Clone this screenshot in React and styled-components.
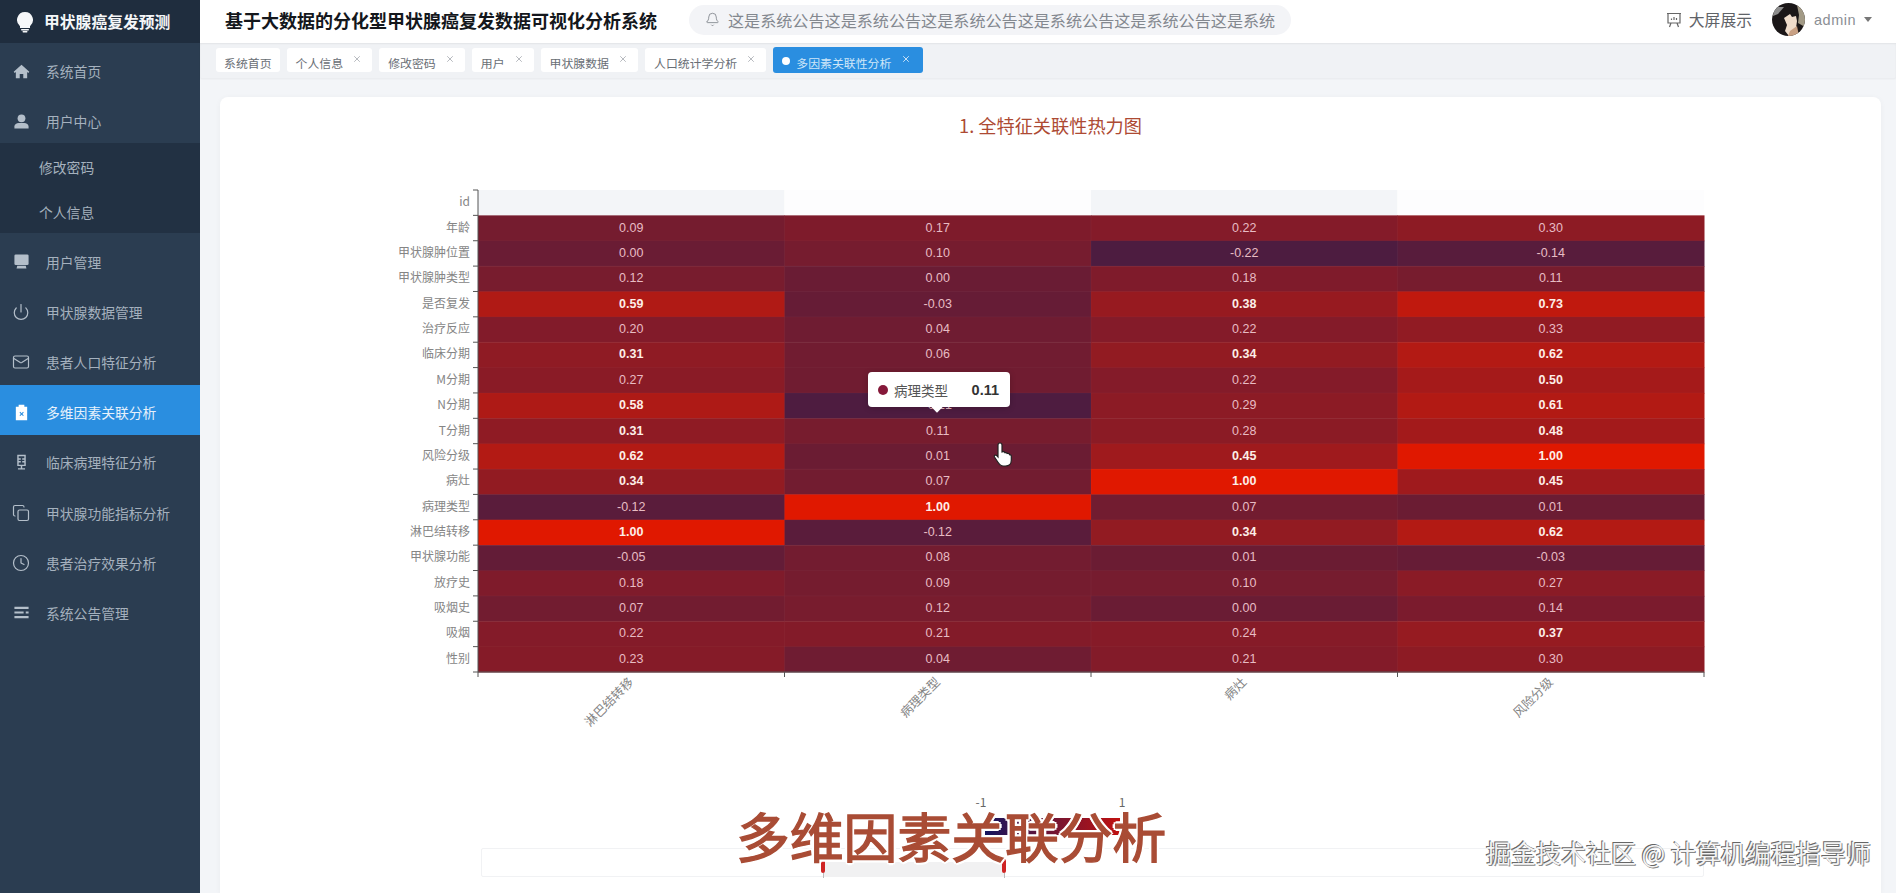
import React from "react";
import styled, { createGlobalStyle } from "styled-components";
import { Bell, Clock, Copy, Mail, Power, X } from "lucide-react";

const FONT = `"Noto Sans CJK SC", "Liberation Sans", sans-serif`;

const GlobalStyle = createGlobalStyle`
  html, body {
    margin: 0;
    padding: 0;
    height: 100%;
    overflow: hidden;
    font-family: ${FONT};
  }
  * { box-sizing: border-box; }
`;

const Page = styled.div`
  display: flex;
  width: 1896px;
  height: 893px;
  overflow: hidden;
  position: relative;
  background: #f3f5f8;
`;

/* sidebar */
const Sidebar = styled.aside`
  width: 200px;
  flex-shrink: 0;
  background: #2b3d51;
  display: flex;
  flex-direction: column;
`;
const Brand = styled.div`
  height: 43px;
  background: #1f2d3e;
  display: flex;
  align-items: center;
  padding-left: 16px;
  gap: 10px;
  color: #f4f6f8;
  font-size: 15.8px;
  font-weight: 700;
  margin-bottom: 1.2px;
`;
const MenuItem = styled.div`
  height: 50.2px;
  display: flex;
  align-items: center;
  padding: 4px 0 0 12px;
  gap: 16px;
  font-size: 13.8px;
  color: ${(p) => (p.$active ? "#e6f1fb" : "#a5b1be")};
  background: ${(p) => (p.$active ? "#2a8ee0" : "transparent")};
`;
const MenuIcon = styled.span`
  width: 18px;
  display: flex;
  justify-content: center;
  color: ${(p) => (p.$active ? "#fff" : "#b4bfca")};
`;
const SubMenu = styled.div`
  background: #223143;
  margin-top: -2px;
  margin-bottom: 2px;
`;
const SubItem = styled.div`
  height: 45px;
  display: flex;
  align-items: center;
  padding: 3px 0 0 39px;
  font-size: 13.8px;
  color: #a5b1be;
`;

/* right part */
const Main = styled.div`
  flex: 1;
  min-width: 0;
  display: flex;
  flex-direction: column;
`;
const Navbar = styled.header`
  height: 43px;
  background: #fff;
  display: flex;
  align-items: center;
  padding: 0 24px 4px 25px;
`;
const AppTitle = styled.div`
  font-size: 18px;
  font-weight: 700;
  color: #14171c;
  white-space: nowrap;
  width: 464px;
`;
const Notice = styled.div`
  width: 602px;
  height: 30px;
  border-radius: 15px;
  background: #f3f4f7;
  display: flex;
  align-items: center;
  padding-left: 16px;
  gap: 8px;
  color: #83888f;
  font-size: 16.1px;
  white-space: nowrap;
  overflow: hidden;
  svg { flex-shrink: 0; }
`;
const NavRight = styled.div`
  margin-left: auto;
  display: flex;
  align-items: center;
`;
const ScreenLink = styled.div`
  display: flex;
  align-items: center;
  gap: 7px;
  font-size: 15.8px;
  color: #5f6368;
  margin-right: 20px;
`;
const UserName = styled.span`
  font-family: "Liberation Sans", sans-serif;
  font-size: 14.5px;
  letter-spacing: 0.5px;
  color: #8b8f95;
  margin-left: 9px;
`;
const Caret = styled.span`
  width: 0;
  height: 0;
  margin-left: 8px;
  border-left: 4px solid transparent;
  border-right: 4px solid transparent;
  border-top: 5px solid #777;
`;

const TagBar = styled.div`
  height: 35px;
  background: #f0f2f5;
  display: flex;
  align-items: center;
  gap: 7px;
  padding: 0 0 1px 16px;
  box-shadow: inset 0 1px 2px rgba(0, 0, 0, 0.06), 0 1px 2px rgba(0, 0, 0, 0.05);
`;
const Tag = styled.div`
  height: ${(p) => (p.$active ? "26px" : "24px")};
  display: flex;
  align-items: center;
  padding: 4px ${(p) => (p.$plain ? "8px" : p.$active ? "12px" : "10px")} 0 ${(p) => (p.$plain ? "8px" : "9px")};
  border-radius: 3px;
  font-size: 11.9px;
  white-space: nowrap;
  background: ${(p) => (p.$active ? "#2a8ee0" : "#fff")};
  color: ${(p) => (p.$active ? "#cfe6f8" : "#696e75")};
`;
const TagDot = styled.i`
  width: 8px;
  height: 8px;
  border-radius: 50%;
  background: #fff;
  margin: -3px 6px 0 0;
`;
const TagClose = styled.span`
  display: flex;
  margin: -6px 0 0 ${(p) => (p.$active ? "10px" : "9px")};
  color: ${(p) => (p.$active ? "#e6f1fb" : "#8b9098")};
`;

const Content = styled.main`
  flex: 1;
  min-height: 0;
  padding: 19px 15px 0 20px;
`;
const Card = styled.section`
  height: 100%;
  background: #fff;
  border-radius: 8px 8px 0 0;
  box-shadow: 0 1px 6px rgba(0, 0, 0, 0.04);
  overflow: hidden;
`;
const ChartTitle = styled.h2`
  margin: 0;
  height: 58px;
  padding-top: 15px;
  text-align: center;
  font-size: 18.2px;
  line-height: 26px;
  font-weight: 400;
  color: #ad4a33;
`;
const ChartSvg = styled.svg`
  display: block;
  font-family: ${FONT};
`;

/* things lying over the chart */
const Tooltip = styled.div`
  position: absolute;
  left: 868px;
  top: 372px;
  width: 142px;
  height: 35px;
  background: #fff;
  border-radius: 4px;
  display: flex;
  align-items: center;
  padding: 0 11px 0 10px;
  font-size: 13.5px;
  color: #555;
  box-shadow: 0 1px 6px rgba(0, 0, 0, 0.2);
  &::after {
    content: "";
    position: absolute;
    left: 65px;
    bottom: -4px;
    width: 8px;
    height: 8px;
    background: #fff;
    transform: rotate(45deg);
  }
`;
const TooltipDot = styled.i`
  width: 10px;
  height: 10px;
  border-radius: 50%;
  background: #85193a;
  margin-right: 6px;
`;
const TooltipValue = styled.b`
  margin-left: auto;
  font-family: "Liberation Sans", sans-serif;
  font-size: 14.5px;
  color: #333;
`;
const HandCursor = styled.svg`
  position: absolute;
  left: 992px;
  top: 441px;
`;
const Caption = styled.div`
  position: absolute;
  left: 736px;
  top: 797px;
  font-size: 53.8px;
  line-height: 76px;
  font-weight: 400;
  color: #a94c35;
  -webkit-text-stroke: 1.4px #a94c35;
  white-space: nowrap;
  text-shadow: 3px 0 #fff, -3px 0 #fff, 0 3px #fff, 0 -3px #fff, 2px 2px #fff, -2px -2px #fff, 2px -2px #fff, -2px 2px #fff;
`;
const Watermark = styled.div`
  position: absolute;
  left: 1486px;
  top: 834px;
  font-size: 25px;
  line-height: 36px;
  color: #f4f4f4;
  white-space: nowrap;
  text-shadow: -1px -1px 0 #666, 1px 1px 0 #888;
`;
const SliderTrack = styled.div`
  position: absolute;
  left: 481px;
  top: 848px;
  width: 1223px;
  height: 29px;
  border: 1px solid #f1f2f4;
  border-radius: 2px;
`;
const SliderRange = styled.div`
  position: absolute;
  left: 341px;
  top: 13px;
  width: 181px;
  height: 15px;
  background: #f1f1f2;
`;
const SliderHandle = styled.i`
  position: absolute;
  top: -3px;
  ${(p) => (p.$right ? "right: -2px;" : "left: -2px;")}
  width: 4px;
  height: 14px;
  border-radius: 2px;
  background: #cf2424;
  &::after {
    content: "";
    position: absolute;
    left: 1.5px;
    top: 14px;
    width: 1px;
    height: 5px;
    background: #bbb;
  }
`;

/* icons drawn for the menu */
const Glyph = ({ size = 17, children }) => (
  <svg width={size} height={size} viewBox="0 0 24 24" fill="currentColor">
    {children}
  </svg>
);
const HomeIcon = () => (
  <Glyph>
    <path d="M12 2.5 1 12.5l1.4 1.6 1.6-1.3V21.5h5.5v-6h5v6H20v-8.7l1.6 1.3 1.4-1.6z" />
  </Glyph>
);
const UserIcon = () => (
  <Glyph>
    <circle cx="12" cy="7.5" r="5.5" />
    <path d="M2 22v-3c0-3 3-5 6-5h8c3 0 6 2 6 5v3z" />
  </Glyph>
);
const PlatformIcon = () => (
  <Glyph>
    <path d="M4 2h16a2 2 0 0 1 2 2v11a2 2 0 0 1-2 2H4a2 2 0 0 1-2-2V4a2 2 0 0 1 2-2z" />
    <path d="M6 18h12l1 4H5z" />
  </Glyph>
);
const ClipboardIcon = () => (
  <Glyph>
    <path fillRule="evenodd" d="M8 1h8v3h4v19H4V4h4zM9.2 12l2 2-2 2 1 1 2-2 2 2 1-1-2-2 2-2-1-1-2 2-2-2z" />
  </Glyph>
);
const MicIcon = () => (
  <Glyph>
    <path
      fill="none"
      stroke="currentColor"
      strokeWidth="2"
      d="M7 2h10v14H7zM7 7h4M7 11h4M13 7h4M13 11h4M12 16v4M7 21h10"
    />
  </Glyph>
);
const LinesIcon = () => (
  <Glyph>
    <path d="M2 4h20v3H2zM2 10.5h13v3H2zM18 10.5h4v3h-4zM2 17h20v3H2z" />
  </Glyph>
);
const BulbIcon = () => (
  <svg width="18" height="22" viewBox="0 0 18 22" fill="#f6f8fa">
    <path d="M9 1a8 8 0 0 0-5 14.2V17h10v-1.8A8 8 0 0 0 9 1z" />
    <rect x="5" y="18" width="8" height="1.5" rx=".7" />
    <rect x="6.5" y="20" width="5" height="1.5" rx=".7" />
  </svg>
);
const BoardIcon = () => (
  <svg width="16" height="16" viewBox="0 0 16 16" fill="none" stroke="#666" strokeWidth="1.2">
    <path d="M1 1.5h14M2 1.5V11h12V1.5M5 11l-1.5 4M11 11l1.5 4" />
    <path d="M5.5 8V6.500M8 8V5M10.500 8V6" />
  </svg>
);
const Avatar = () => (
  <svg width="33" height="33" viewBox="0 0 33 33">
    <defs>
      <clipPath id="avatarClip">
        <circle cx="16.5" cy="16.5" r="16.5" />
      </clipPath>
    </defs>
    <g clipPath="url(#avatarClip)">
      <rect width="33" height="33" fill="#1b1718" />
      <path d="M25 2l8 4v18l-7-4 1-8z" fill="#a29a86" />
      <path d="M2 4h10l-6 7-5 2z" fill="#8e8e8e" />
      <path d="M12 15l6-4 2 3 4-1 1 5-1 7-7 8-4-5 2-6z" fill="#efdccb" />
      <path d="M18 28l7-5 2 10H16z" fill="#c9a184" />
    </g>
  </svg>
);

const menuBefore = [
  { label: "系统首页", icon: <HomeIcon /> },
  { label: "用户中心", icon: <UserIcon /> },
];
const menuAfter = [
  { label: "用户管理", icon: <PlatformIcon /> },
  { label: "甲状腺数据管理", icon: <Power size={18} strokeWidth={1.6} /> },
  { label: "患者人口特征分析", icon: <Mail size={18} strokeWidth={1.6} /> },
  { label: "多维因素关联分析", icon: <ClipboardIcon />, active: true },
  { label: "临床病理特征分析", icon: <MicIcon /> },
  { label: "甲状腺功能指标分析", icon: <Copy size={18} strokeWidth={1.6} /> },
  { label: "患者治疗效果分析", icon: <Clock size={18} strokeWidth={1.6} /> },
  { label: "系统公告管理", icon: <LinesIcon /> },
];
const tags = ["个人信息", "修改密码", "用户", "甲状腺数据", "人口统计学分析"];

/* heat map data, one row per feature, top to bottom */
const rows = [
  ["年龄", 0.09, 0.17, 0.22, 0.3],
  ["甲状腺肿位置", 0, 0.1, -0.22, -0.14],
  ["甲状腺肿类型", 0.12, 0, 0.18, 0.11],
  ["是否复发", 0.59, -0.03, 0.38, 0.73],
  ["治疗反应", 0.2, 0.04, 0.22, 0.33],
  ["临床分期", 0.31, 0.06, 0.34, 0.62],
  ["M分期", 0.27, 0.05, 0.22, 0.5],
  ["N分期", 0.58, -0.21, 0.29, 0.61],
  ["T分期", 0.31, 0.11, 0.28, 0.48],
  ["风险分级", 0.62, 0.01, 0.45, 1],
  ["病灶", 0.34, 0.07, 1, 0.45],
  ["病理类型", -0.12, 1, 0.07, 0.01],
  ["淋巴结转移", 1, -0.12, 0.34, 0.62],
  ["甲状腺功能", -0.05, 0.08, 0.01, -0.03],
  ["放疗史", 0.18, 0.09, 0.1, 0.27],
  ["吸烟史", 0.07, 0.12, 0, 0.14],
  ["吸烟", 0.22, 0.21, 0.24, 0.37],
  ["性别", 0.23, 0.04, 0.21, 0.3],
];
const columns = ["淋巴结转移", "病理类型", "病灶", "风险分级"];

const cellColor = (v) => {
  if (v < 0) return `rgb(${106 + 132 * v},28,${52 - 55 * v})`;
  return `rgb(${106 + 118 * v},${28 - 4 * v},${52 - 52 * v})`;
};

const GRID = { x: 258, y: 35, w: 1226, h: 482 };
const colW = GRID.w / 4;
const rowH = GRID.h / 19;

const Heatmap = () => (
  <ChartSvg width="1661" height="680" viewBox="0 0 1661 680">
    <defs>
      <linearGradient id="mapScale" x1="0" x2="1" y1="0" y2="0">
        <stop offset="0" stopColor="#14145e" />
        <stop offset="0.55" stopColor="#7a1530" />
        <stop offset="1" stopColor="#c01010" />
      </linearGradient>
    </defs>

    {/* the empty id row */}
    <rect x={GRID.x} y={GRID.y} width={colW} height={rowH} fill="#f3f5f8" />
    <rect x={GRID.x + colW} y={GRID.y} width={colW} height={rowH} fill="#fdfdfe" />
    <rect x={GRID.x + colW * 2} y={GRID.y} width={colW} height={rowH} fill="#f3f5f8" />
    <rect x={GRID.x + colW * 3} y={GRID.y} width={colW} height={rowH} fill="#fdfdfe" />

    {rows.map(([name, ...values], r) =>
      values.map((v, c) => {
        const x = GRID.x + c * colW;
        const y = GRID.y + (r + 1) * rowH;
        const strong = v > 0.3 && v !== 0.33;
        return (
          <g key={name + c}>
            <rect x={x} y={y} width={colW + 0.5} height={rowH + 0.5} fill={cellColor(v)} />
            <text
              x={x + colW / 2}
              y={y + rowH / 2 + 3.5}
              textAnchor="middle"
              fontFamily="'Liberation Sans', sans-serif"
              fontSize="12.5"
              fontWeight={strong ? 700 : 400}
              fill={strong ? "#fdeee8" : "#e8bcc4"}
            >
              {v.toFixed(2)}
            </text>
          </g>
        );
      })
    )}

    {/* faint separators between the cells */}
    {[1, 2, 3].map((i) => (
      <line
        key={i}
        x1={GRID.x + i * colW}
        x2={GRID.x + i * colW}
        y1={GRID.y + rowH}
        y2={GRID.y + GRID.h}
        stroke="rgba(255,255,255,0.03)"
      />
    ))}
    {rows.map((_, i) => (
      <line
        key={i}
        x1={GRID.x}
        x2={GRID.x + GRID.w}
        y1={GRID.y + (i + 2) * rowH}
        y2={GRID.y + (i + 2) * rowH}
        stroke="rgba(255,255,255,0.03)"
      />
    ))}

    {/* y axis */}
    <line x1={GRID.x} x2={GRID.x} y1={GRID.y} y2={GRID.y + GRID.h} stroke="#555" />
    {Array.from({ length: 20 }, (_, i) => (
      <line
        key={i}
        x1={GRID.x - 5}
        x2={GRID.x}
        y1={GRID.y + i * rowH}
        y2={GRID.y + i * rowH}
        stroke="#555"
      />
    ))}
    {["id", ...rows.map((row) => row[0])].map((name, i) => (
      <text
        key={name}
        x={GRID.x - 8}
        y={GRID.y + i * rowH + rowH / 2 + 3.5}
        textAnchor="end"
        fontSize="12"
        fill="#858585"
      >
        {name}
      </text>
    ))}

    {/* x axis */}
    <line x1={GRID.x} x2={GRID.x + GRID.w} y1={GRID.y + GRID.h} y2={GRID.y + GRID.h} stroke="#555" />
    {[0, 1, 2, 3, 4].map((i) => (
      <line
        key={i}
        x1={GRID.x + i * colW}
        x2={GRID.x + i * colW}
        y1={GRID.y + GRID.h}
        y2={GRID.y + GRID.h + 5}
        stroke="#555"
      />
    ))}
    {columns.map((name, i) => (
      <text
        key={name}
        transform={`translate(${GRID.x + (i + 0.5) * colW + 3} ${GRID.y + GRID.h + 11}) rotate(-45)`}
        textAnchor="end"
        fontSize="12.5"
        fill="#858585"
      >
        {name}
      </text>
    ))}

    {/* visual map behind the caption */}
    <text x="761" y="652" textAnchor="middle" fontSize="12" fill="#666">-1</text>
    <text x="902" y="652" textAnchor="middle" fontSize="12" fill="#666">1</text>
    <rect x="765" y="663" width="135" height="17" fill="url(#mapScale)" />
  </ChartSvg>
);

export default function App() {
  return (
    <Page>
      <GlobalStyle />
      <Sidebar>
        <Brand>
          <BulbIcon />
          甲状腺癌复发预测
        </Brand>
        {menuBefore.map((item) => (
          <MenuItem key={item.label}>
            <MenuIcon>{item.icon}</MenuIcon>
            {item.label}
          </MenuItem>
        ))}
        <SubMenu>
          <SubItem>修改密码</SubItem>
          <SubItem>个人信息</SubItem>
        </SubMenu>
        {menuAfter.map((item) => (
          <MenuItem key={item.label} $active={item.active}>
            <MenuIcon $active={item.active}>{item.icon}</MenuIcon>
            {item.label}
          </MenuItem>
        ))}
      </Sidebar>

      <Main>
        <Navbar>
          <AppTitle>基于大数据的分化型甲状腺癌复发数据可视化分析系统</AppTitle>
          <Notice>
            <Bell size={15} strokeWidth={1.4} />
            这是系统公告这是系统公告这是系统公告这是系统公告这是系统公告这是系统
          </Notice>
          <NavRight>
            <ScreenLink>
              <BoardIcon />
              大屏展示
            </ScreenLink>
            <Avatar />
            <UserName>admin</UserName>
            <Caret />
          </NavRight>
        </Navbar>

        <TagBar>
          <Tag $plain>系统首页</Tag>
          {tags.map((tag) => (
            <Tag key={tag}>
              {tag}
              <TagClose>
                <X size={10} strokeWidth={1.5} />
              </TagClose>
            </Tag>
          ))}
          <Tag $active>
            <TagDot />
            多因素关联性分析
            <TagClose $active>
              <X size={10} strokeWidth={2} />
            </TagClose>
          </Tag>
        </TagBar>

        <Content>
          <Card>
            <ChartTitle>1. 全特征关联性热力图</ChartTitle>
            <Heatmap />
          </Card>
        </Content>
      </Main>

      <SliderTrack>
        <SliderRange>
          <SliderHandle />
          <SliderHandle $right />
        </SliderRange>
      </SliderTrack>

      <Tooltip>
        <TooltipDot />
        病理类型
        <TooltipValue>0.11</TooltipValue>
      </Tooltip>
      <HandCursor width="24" height="26" viewBox="0 0 24 26">
        <path
          d="M8 2c1.2 0 2 .8 2 2v7l1-.3c1-.2 1.6.2 2 1 1-.4 1.8 0 2.200.8 1-.3 2 .1 2.300 1.200.8-.2 1.800.4 1.800 1.500v4c0 3-2 5.800-6 5.800h-2c-3 0-4-1.500-5.500-4L2.500 16c-.8-1.400 1-2.600 2.200-1.500L6 16V4c0-1.200.8-2 2-2z"
          fill="#fff"
          stroke="#222"
          strokeWidth="1.2"
        />
      </HandCursor>
      <Caption>多维因素关联分析</Caption>
      <Watermark>掘金技术社区 @ 计算机编程指导师</Watermark>
    </Page>
  );
}
